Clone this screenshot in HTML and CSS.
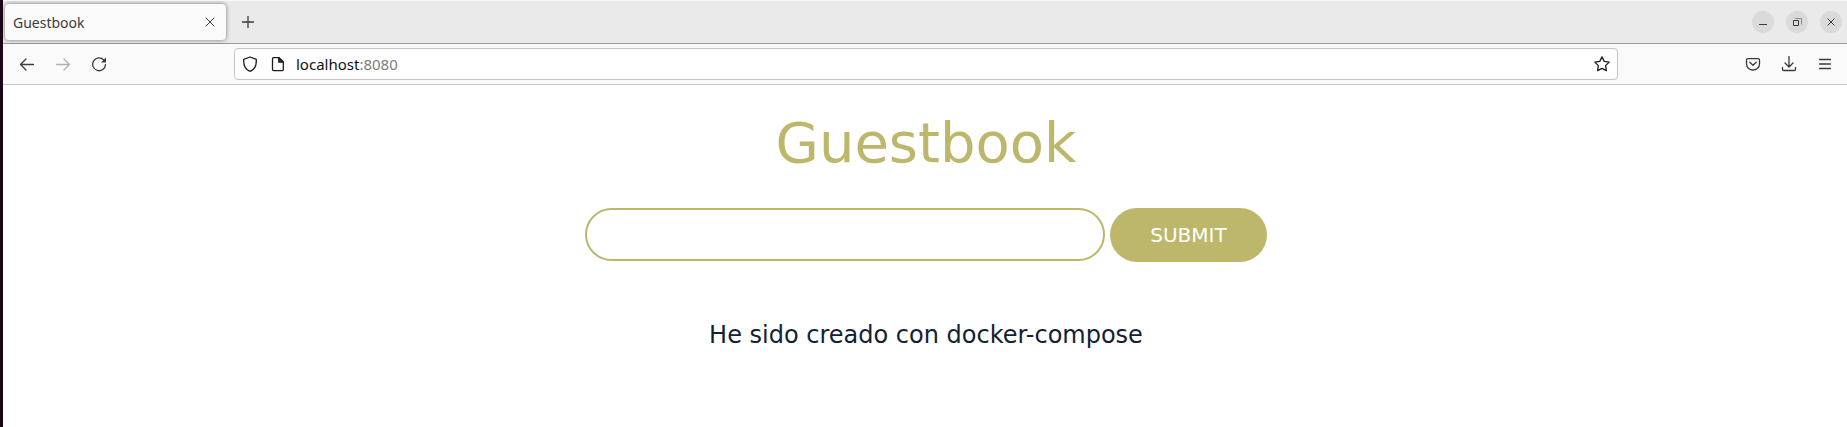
FILE: index.html
```html
<!DOCTYPE html>
<html lang="es">
<head>
<meta charset="utf-8">
<title>Guestbook</title>
<link rel="stylesheet" href="styles.css">
</head>
<body>
<div class="window">
  <header class="tabbar">
    <div class="tab">
      <span class="tab-title">Guestbook</span>
      <button class="icon-btn tab-close" aria-label="Close tab"><svg width="16" height="16" viewBox="0 0 16 16"><path d="M4 4l8 8M12 4l-8 8"/></svg></button>
    </div>
    <button class="icon-btn new-tab" aria-label="New tab"><svg width="16" height="16" viewBox="0 0 16 16"><path d="M8 2.500v11M2.500 8h11"/></svg></button>
    <div class="controls">
      <button class="round" aria-label="Minimize"><svg width="16" height="16" viewBox="0 0 16 16"><path d="M4 10.500h8"/></svg></button>
      <button class="round" aria-label="Restore"><svg width="16" height="16" viewBox="0 0 16 16"><path class="faint" d="M6 4.500h6.500v6"/><path d="M4.500 6.500h5v5h-5z"/></svg></button>
      <button class="round" aria-label="Close"><svg width="16" height="16" viewBox="0 0 16 16"><path d="M4.500 4.500l7 7M11.500 4.500l-7 7"/></svg></button>
    </div>
  </header>
  <nav class="toolbar">
    <div class="history">
      <button class="icon-btn" aria-label="Back"><svg width="16" height="16" viewBox="0 0 16 16"><path d="M14.500 8.500H1.500M7 3L1.500 8.500 7 14"/></svg></button>
      <button class="icon-btn" aria-label="Forward" disabled><svg width="16" height="16" viewBox="0 0 16 16"><path d="M1.500 8.500h13M9 3l5.500 5.500L9 14"/></svg></button>
      <button class="icon-btn" aria-label="Reload"><svg width="16" height="16" viewBox="0 0 16 16"><path d="M12.800 4A6.400 6.400 0 1 0 14.500 8.500"/><path class="tip" d="M15 1.500v5h-5z"/></svg></button>
    </div>
    <div class="urlbar">
      <svg class="dark shield" width="16" height="16" viewBox="0 0 16 16"><path d="M8 1L14.300 3.300C14.600 8.500 13 13.500 8 15.300C3 13.500 1.400 8.500 1.700 3.300z"/></svg>
      <svg class="dark" width="16" height="16" viewBox="0 0 16 16"><path d="M3.500 1.700H9l4.300 4.300v7.600q0 1-1 1H3.500q-1 0-1-1V2.700q0-1 1-1z"/><path class="solid" d="M8.800 1.700l4.500 4.500H8.800z"/></svg>
      <a class="url" href="#">localhost<span class="port">:8080</span></a>
      <button class="icon-btn dark" aria-label="Bookmark"><svg width="16" height="16" viewBox="0 0 16 16"><path d="M8 .900l2.200 4.500 5 .700-3.600 3.500.800 5L8 12.300l-4.400 2.300.800-5L.800 6.100l5-.700z"/></svg></button>
    </div>
    <div class="actions">
      <button class="icon-btn" aria-label="Save to Pocket"><svg width="16" height="16" viewBox="0 0 16 16"><path d="M2.700 2.700h10.600q1.200 0 1.200 1.200V8a6.500 6 0 0 1-13 0V3.900q0-1.200 1.200-1.200zM4.800 6.300L8 9.300l3.200-3"/></svg></button>
      <button class="icon-btn" aria-label="Downloads"><svg width="16" height="16" viewBox="0 0 16 16"><path d="M8 .500v10M4 7l4 4 4-4M1.500 11.500v1.800q0 1.200 1.200 1.200h10.600q1.200 0 1.200-1.200v-1.800"/></svg></button>
      <button class="icon-btn" aria-label="Menu"><svg width="16" height="16" viewBox="0 0 16 16"><path d="M2.500 3.500h11M2.500 8h11M2.500 12.500h11"/></svg></button>
    </div>
  </nav>
  <main class="page">
    <h1>Guestbook</h1>
    <form class="entry">
      <input class="entry-text" type="text" aria-label="Entry">
      <button class="submit" type="button">SUBMIT</button>
    </form>
    <p class="message">He sido creado con docker-compose</p>
  </main>
</div>
</body>
</html>
```
FILE: styles.css
```css
* { box-sizing: border-box; }

body {
  margin: 0;
  background: #fff;
  font-family: "DejaVu Sans", sans-serif;
}

button { border: 0; padding: 0; background: none; }

svg {
  display: block;
  flex: none;
  fill: none;
  stroke: #3c3c3c;
  stroke-width: 1.3;
  stroke-linecap: round;
  stroke-linejoin: round;
}

.dark, .dark svg { stroke: #1c1c1c; }
.solid { fill: #3c3c3c; }
.tip { fill: #3c3c3c; stroke: none; }
.faint { stroke: #8a8a8a; }
.icon-btn:disabled svg { stroke: #b0b0b0; }

.window {
  min-height: 100vh;
  border-left: 3px solid #1c0714;
}

.tabbar {
  display: flex;
  align-items: center;
  height: 44px;
  padding: 0 5px 0 2px;
  background: #eaeaea;
  border-top: 1px solid #fafafa;
  border-bottom: 1px solid #9c9c9c;
}

.tab {
  display: flex;
  align-items: center;
  justify-content: space-between;
  width: 221px;
  height: 36px;
  padding: 0 8px;
  border-radius: 4px;
  background: #fafafa;
  box-shadow: 0 0 4px rgba(0, 0, 0, 0.5);
  font: 14px "Noto Sans", sans-serif;
  color: #3c3c3c;
}

.tab-close svg { stroke-width: 1; }
.new-tab { margin-left: 14px; }

.controls {
  display: flex;
  gap: 12px;
  margin-left: auto;
}

.round {
  display: grid;
  place-items: center;
  width: 22px;
  height: 22px;
  border-radius: 50%;
  background: #dadada;
}

.round svg { stroke-width: 1; stroke-linecap: butt; stroke-linejoin: miter; }

.toolbar {
  display: flex;
  align-items: center;
  height: 41px;
  padding: 0 14px 0 16px;
  background: #fafafa;
  border-bottom: 1px solid #c8c8c8;
}

.history, .actions { display: flex; gap: 20px; }
.history { margin-right: 127px; }
.actions { margin-left: 127px; }

.urlbar {
  display: flex;
  flex: 1;
  align-items: center;
  gap: 10px;
  height: 32px;
  padding: 0 7px;
  border: 1px solid #c4c4c4;
  border-radius: 4px;
  background: #fff;
}

.shield { margin-right: 2px; }

.url {
  flex: 1;
  font: 15px/20px "Noto Sans", sans-serif;
  color: #111;
  text-decoration: none;
}

.port { color: #7c7c7c; }

.page {
  display: flex;
  flex-direction: column;
  align-items: center;
  padding-left: 2px;
}

h1 {
  margin: 24px 0 32px;
  font-size: 56px;
  font-weight: 400;
  line-height: 67px;
  color: #bdb76b;
}

.entry {
  display: flex;
  align-items: flex-start;
  justify-content: center;
  gap: 5px;
  width: 100%;
}

.entry-text {
  width: 520px;
  height: 53px;
  padding: 0 24px;
  border: 2px solid #bdb76b;
  border-radius: 27px;
  background: #fff;
  font: inherit;
  font-size: 20px;
}

.submit {
  height: 54px;
  padding: 0 40px;
  border-radius: 27px;
  background: #bdb76b;
  font: 20px "DejaVu Sans", sans-serif;
  color: #fff;
}

.message {
  margin: 57px 0 0;
  font-size: 24px;
  line-height: 32px;
  color: #112233;
}
```
